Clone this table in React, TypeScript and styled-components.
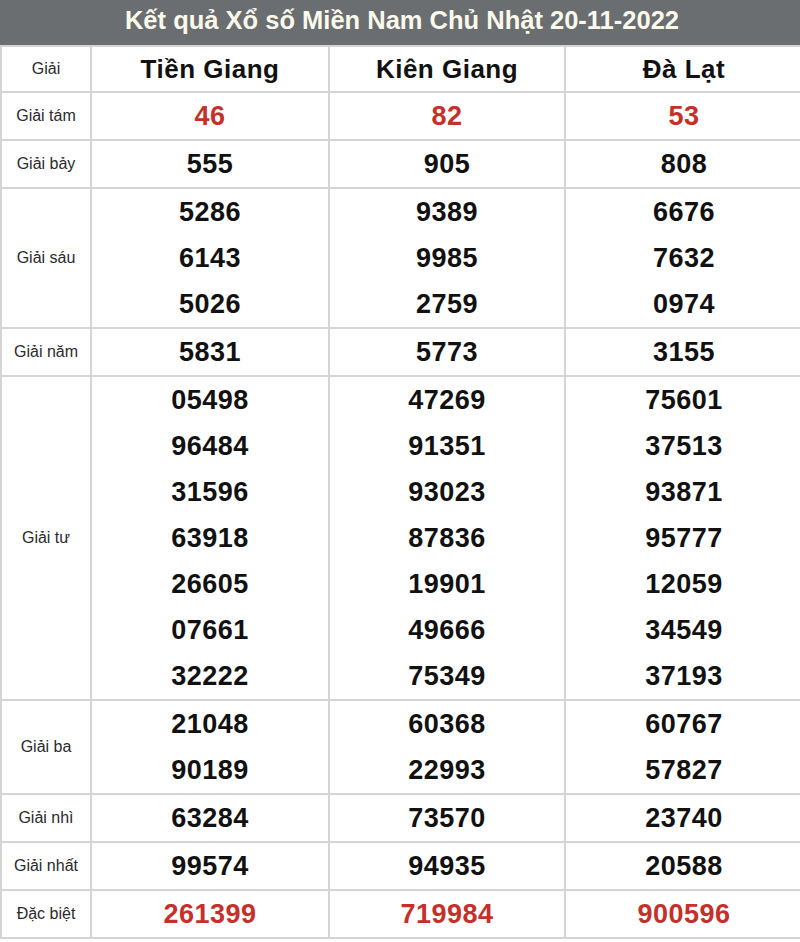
import React from 'react';
import styled, { createGlobalStyle } from 'styled-components';

const GlobalStyle = createGlobalStyle`
  html, body {
    margin: 0;
    padding: 0;
    background: #fff;
    font-family: "Liberation Sans", Arial, sans-serif;
  }
`;

const Wrapper = styled.div`
  width: 800px;
  overflow: hidden;
`;

const TitleBar = styled.div`
  height: 45px;
  background: #6b6e70;
  color: #fbf9ec;
  font-size: 25.5px;
  font-weight: bold;
  display: flex;
  align-items: center;
  justify-content: center;
  padding: 0 0 5px 4px;
  box-sizing: border-box;
`;

const Grid = styled.div`
  display: grid;
  grid-template-columns: 88px 236px 234px 236px;
  gap: 2px;
  padding: 2px 0 2px 2px;
  background: #d4d4d4;
`;

const Cell = styled.div<{ $head?: boolean }>`
  background: #fff;
  display: flex;
  flex-direction: column;
  align-items: center;
  justify-content: center;
  min-height: ${p => (p.$head ? 44 : 46)}px;
`;

const Label = styled.span`
  font-size: 16px;
  color: #2a2a2e;
`;

const Province = styled.span`
  font-size: 26px;
  font-weight: bold;
  color: #111;
  letter-spacing: 0.5px;
`;

const Num = styled.span<{ $red?: boolean }>`
  display: block;
  height: 46px;
  line-height: 46px;
  font-size: 27px;
  font-weight: bold;
  letter-spacing: 0.5px;
  color: ${p => (p.$red ? '#c5302a' : '#111')};
`;

const provinces = ['Tiền Giang', 'Kiên Giang', 'Đà Lạt'];

const prizes: { name: string; red?: boolean; values: string[][] }[] = [
  { name: 'Giải tám', red: true, values: [['46'], ['82'], ['53']] },
  { name: 'Giải bảy', values: [['555'], ['905'], ['808']] },
  {
    name: 'Giải sáu',
    values: [
      ['5286', '6143', '5026'],
      ['9389', '9985', '2759'],
      ['6676', '7632', '0974'],
    ],
  },
  { name: 'Giải năm', values: [['5831'], ['5773'], ['3155']] },
  {
    name: 'Giải tư',
    values: [
      ['05498', '96484', '31596', '63918', '26605', '07661', '32222'],
      ['47269', '91351', '93023', '87836', '19901', '49666', '75349'],
      ['75601', '37513', '93871', '95777', '12059', '34549', '37193'],
    ],
  },
  {
    name: 'Giải ba',
    values: [
      ['21048', '90189'],
      ['60368', '22993'],
      ['60767', '57827'],
    ],
  },
  { name: 'Giải nhì', values: [['63284'], ['73570'], ['23740']] },
  { name: 'Giải nhất', values: [['99574'], ['94935'], ['20588']] },
  { name: 'Đặc biệt', red: true, values: [['261399'], ['719984'], ['900596']] },
];

export default function App() {
  return (
    <Wrapper>
      <GlobalStyle />
      <TitleBar>Kết quả Xổ số Miền Nam Chủ Nhật 20-11-2022</TitleBar>
      <Grid>
        <Cell $head>
          <Label>Giải</Label>
        </Cell>
        {provinces.map(p => (
          <Cell $head key={p}>
            <Province>{p}</Province>
          </Cell>
        ))}
        {prizes.map(prize => (
          <React.Fragment key={prize.name}>
            <Cell>
              <Label>{prize.name}</Label>
            </Cell>
            {prize.values.map((list, i) => (
              <Cell key={i}>
                {list.map(v => (
                  <Num key={v} $red={prize.red}>
                    {v}
                  </Num>
                ))}
              </Cell>
            ))}
          </React.Fragment>
        ))}
      </Grid>
    </Wrapper>
  );
}
